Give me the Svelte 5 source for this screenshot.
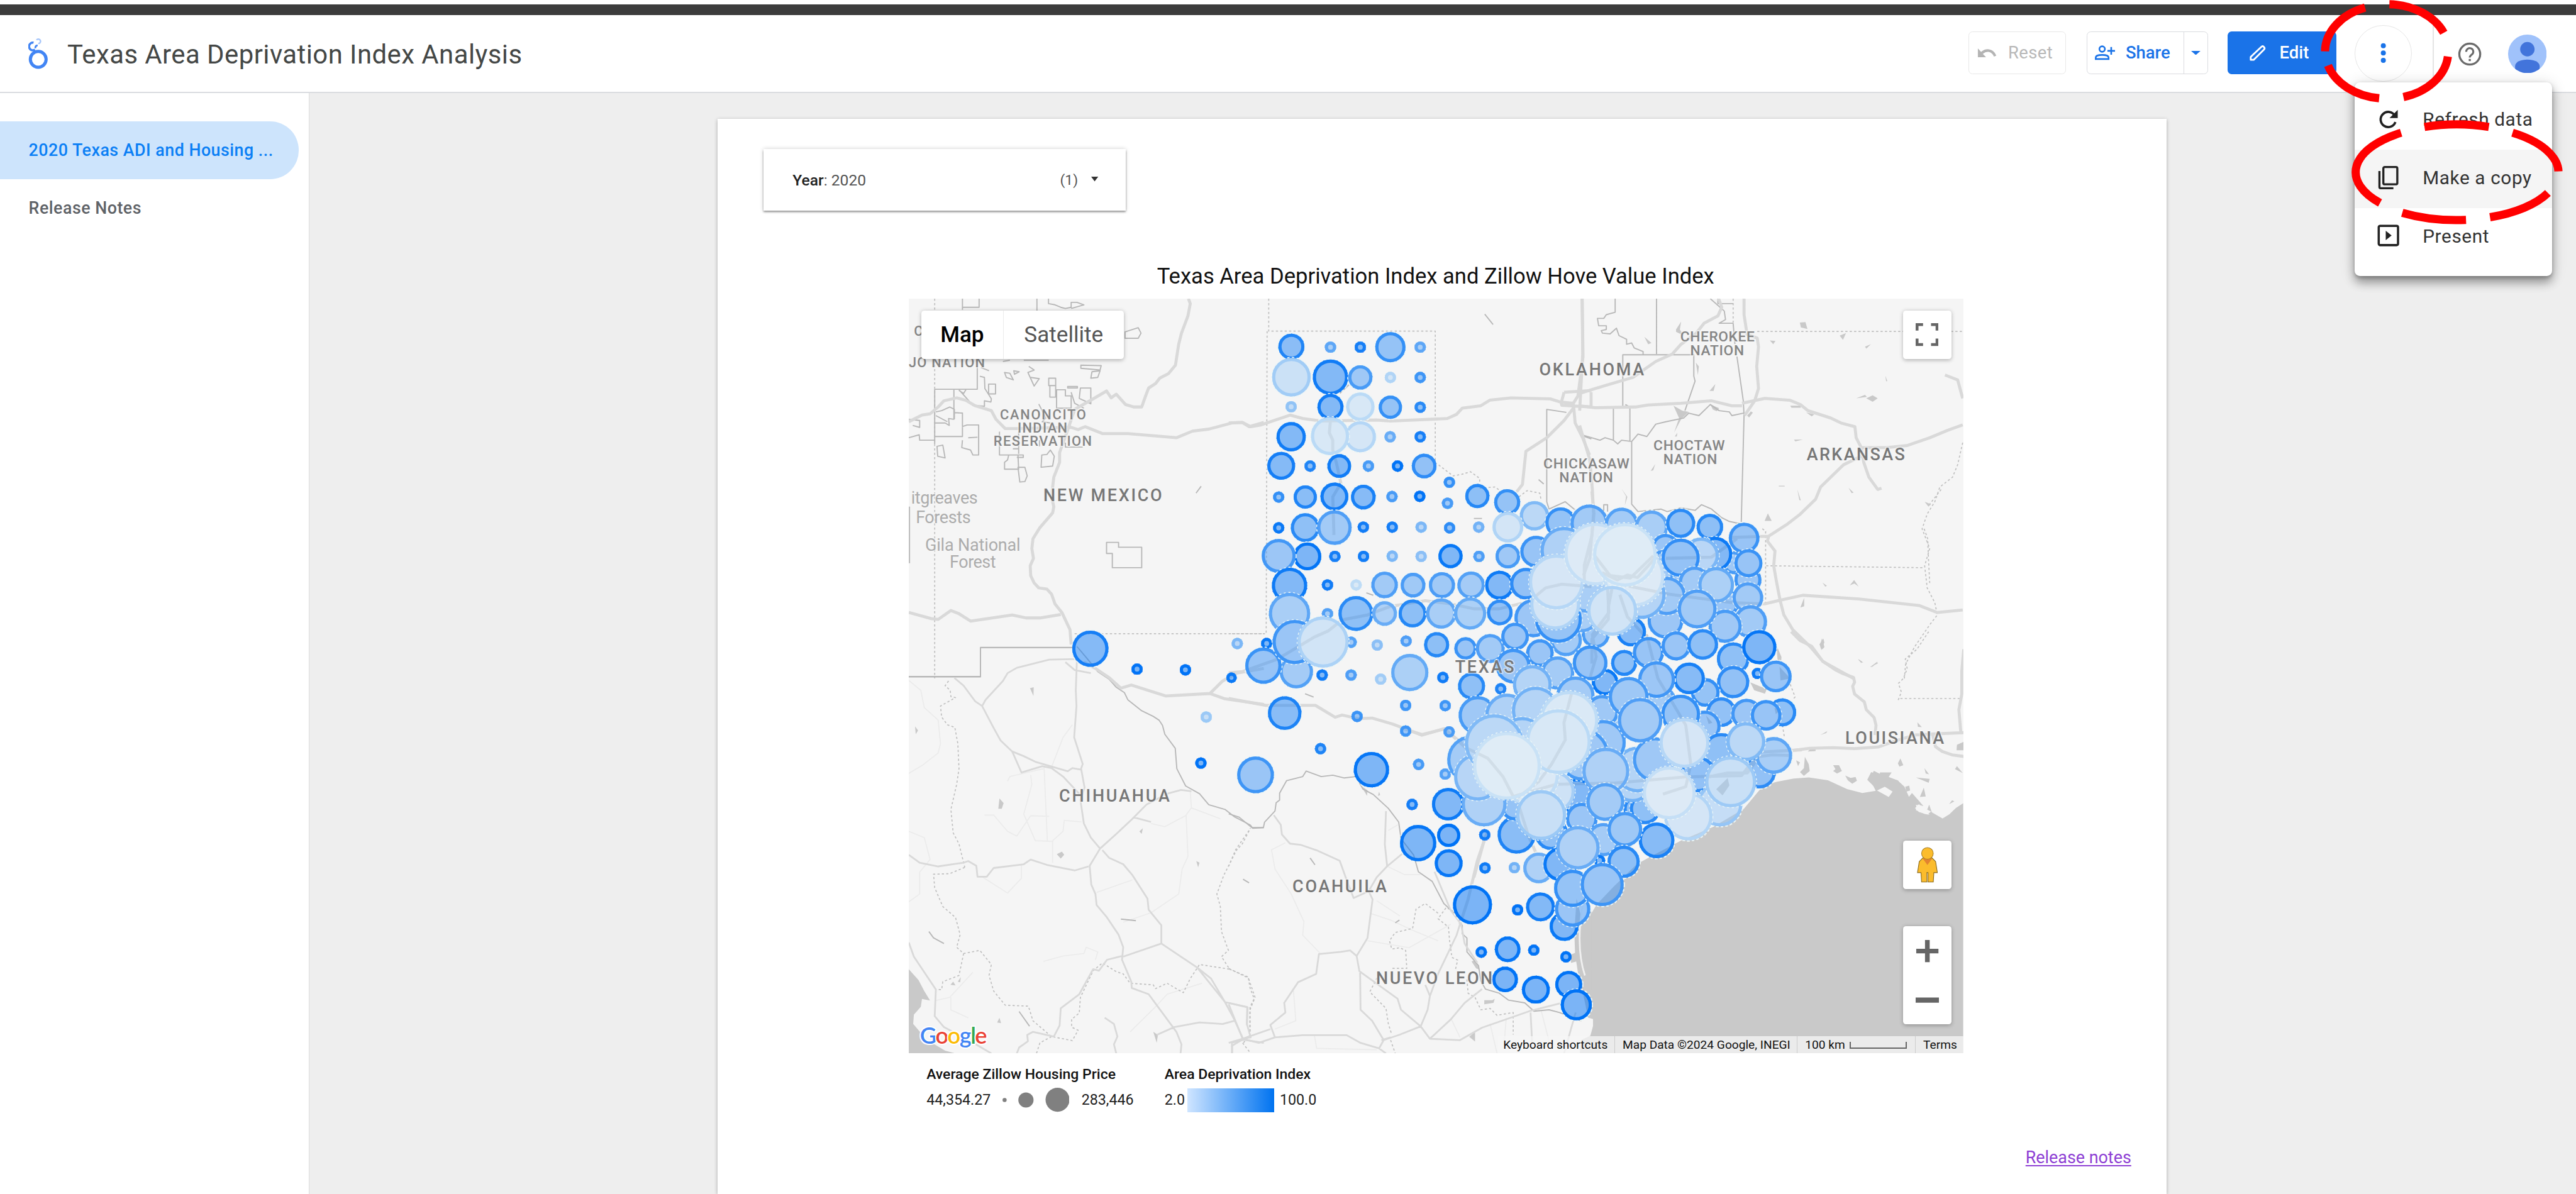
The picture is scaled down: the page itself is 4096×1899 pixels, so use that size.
<script>
  const pages = ['2020 Texas ADI and Housing ...', 'Release Notes'];

  // Map artwork is stored per tile: origin on the page plus units per page pixel.
  const T = {
    nw: { o: [1540, 500], k: [2.529, 2.3758] },
    panhandle: { o: [2100, 500], k: [2.529, 2.3758] },
    ne: { o: [2700, 500], k: [2.3059, 2.3758] },
    sw: { o: [1540, 1100], k: [2.529, 1.8667] },
    center: { o: [2400, 840], k: [2.3059, 2.3758] },
    south: { o: [2100, 1080], k: [2.529, 2.1189] },
    gulf: { o: [2700, 1300], k: [1.53125, 2.1132] },
    coast: { o: [2920, 1080], k: [3, 3] }
  };

  const place = (t) => `translate(${t.o[0]} ${t.o[1]}) scale(${1 / t.k[0]} ${1 / t.k[1]})`;

  const tiles = [
    {
      t: T.gulf,
      water: 'M-8,500 L-14,620 -12,700 -2,790 10,850 22,930 35,935 35,960 28,995 5,1010 0,1059 H1004 V155 L985,172 968,195 950,210 922,188 915,160 905,195 880,180 885,160 900,165 870,118 862,132 850,95 832,72 800,58 770,38 760,68 775,110 740,118 700,104 650,72 600,62 560,66 515,78 480,92 430,175 350,240 265,290 190,345 150,375 90,455 45,520 10,600 Z',
      land: 'M780,108L800,95 820,108 810,130Z M880,160L895,168 920,185 910,196 885,182Z',
      roads: '', thin: '', border: '', dotted: ''
    },
    {
      t: T.nw,
      roads: 'M1242,25 L1250,45 1240,95 1212,165 1200,210 1186,295 1155,330 1118,348 1100,370 1070,388 1057,420 1040,465 1005,465 970,455 930,413 908,428 888,400 830,432 750,475 725,545 M33,525 L90,498 125,493 160,465 185,440 240,428 280,438 320,460 390,480 410,515 450,553 500,553 735,548 765,557 795,545 870,573 980,573 1190,590 1260,563 1330,555 1430,530 1475,528 1505,545 1568,528 M725,545 L685,650 685,690 660,750 650,830 660,870 655,895 600,955 570,1000 565,1040 572,1080 558,1110 560,1150 575,1180 595,1200 630,1205 650,1225 665,1265 695,1300 730,1370 735,1430 M33,1300 L130,1325 160,1328 215,1292 250,1305 300,1335 480,1310 540,1322 600,1322 690,1308',
      thin: '',
      border: 'M265,25V70 M265,60H337V25 M587,25V75 M329,290V393H145V615 M33,1560H343V1443H740 M888,1015H940V1035H1040V1118H913V1060H888Z M968,160L1025,143 1037,165 1025,186H968Z M637,25V45L665,50 690,60 710,65 735,60V40H760L790,50 735,65 M340,340L360,345 362,390 390,432 388,445 360,440V462L310,458 250,395 M378,372H408V412H378Z M228,395V515L205,512 208,540 190,530H145V585H265V490L230,488 M263,545L285,538H335V660H310L300,640 262,630 265,600 M290,590L330,588 M33,590L78,578 80,600H145 M33,515L80,520V548L50,540 M155,625L180,620 190,672 158,665Z M150,485L175,480 210,465 230,475V515 M150,500L200,525 M777,295L865,297 860,315 777,308Z M825,322L860,318 850,345 820,348Z M552,300L575,315 548,325 575,380 597,350 560,345 M447,325L470,328 485,355 455,345Z M487,318L510,322 490,332Z M638,348H668V378H638Z M643,378H668V425H643Z M672,395H710V420H735V470H672Z M720,382H762V388H720Z M775,388H820V452L770,430Z M735,405L750,450 790,470 M595,453L615,490 625,510 610,525 645,530 M425,565V660H528V670H500 M483,635H508V655 M508,565V655 M447,690L460,680 465,660H505L508,718H447Z M505,710H535L545,745 535,768 513,770Z M605,710L608,660 630,658 645,640 662,665 655,705Z M598,625V600 M710,610V628H785 M530,275H638 M440,280L470,275 M345,305L380,318 M36,870V1100 M1275,815L1297,787 M250,398L270,410 280,395',
      dotted: 'M145,25V1568 M750,1386H1568',
      water: '', land: ''
    },
    {
      t: T.panhandle,
      roads: 'M0,530 L60,528 95,545 140,538 265,498 320,512 400,522 640,518 700,522 945,512 985,495 1010,470 1090,460 1130,437 1220,428 1390,432 1435,445 1490,450 M440,520 L435,570 450,600 450,640 465,690 485,775 450,830 455,985 M0,1545 L60,1540 210,1490 370,1400 430,1375 490,1330 600,1310 700,1275 850,1252 960,1265 1060,1285 1170,1285 1300,1255 1370,1200 1440,1185 1568,1195 M1528,25 L1532,260 1510,420 1490,450 M1490,470 L1450,520 1375,590 1285,645 1280,690 1270,780 1245,810 M1450,405 L1568,398 M1440,440 L1450,405 M1435,440 L1440,458 1568,465 M1490,450 L1498,530 1530,590 1560,660',
      thin: '',
      border: 'M1460,487L1375,475V850L1385,880 M1525,580L1568,595 M1107,88L1143,130 M1340,760L1362,778 M480,410L520,375 M1385,880L1455,850 1500,885 M1060,918H1095 M595,1220L625,1230',
      dotted: 'M173,25V157H893V690L935,720 970,745 1010,738 1045,728 1085,755 1085,795 1150,790 1190,815 M166,157L162,1386H0 M1255,830L1290,805 1345,815 1350,840',
      water: '', land: ''
    },
    {
      t: T.ne,
      roads: 'M10,25 L12,250 0,480 M548,25 L560,60 545,95 490,125 460,165 400,210 365,250 300,280 210,345 100,378 0,410 M45,405V465 M0,460 L60,468 220,465 270,457 400,450 520,440 600,460 640,460 M648,25 V90 L660,170 700,185 705,220 698,300 705,390 690,440 650,500 M640,450 L730,430 830,438 870,455 900,480 990,510 1030,530 1085,545 1090,590 1110,630 1210,630 1290,622 1380,590 1450,560 1510,538 M1110,630 L1120,690 1140,750 1175,800 1190,795 M1120,660 L1040,700 950,790 930,840 870,900 820,940 745,990 600,995 M745,990 L740,1010 770,1050 765,1110 775,1170 790,1250 805,1310 840,1370 910,1440 960,1500 1080,1568 M600,1260 L730,1265 790,1250 880,1230 1100,1245 1340,1272 1410,1300 1510,1290 M1440,335 L1490,355 1510,430 M0,540L40,680 50,800 55,900 40,1080 15,1150 M600,1260 L350,1225 180,1190 M60,1070L120,1150 200,1160 290,1070 M340,1080L520,1075 620,1000 M110,1200L115,1300 50,1390 65,1480 40,1568',
      thin: '',
      border: 'M140,25V80L105,90 95,105 70,105 75,135 105,135 105,150 85,155 90,165 120,168 145,145 155,175 185,190 185,210 205,205 215,225 250,240V255 M303,25V250 M170,465V253H450L450,340 455,360 415,480 M620,260L645,440 648,500 637,935 M133,470V600 M198,460V605 M15,580L80,600 100,590 133,600 150,615 165,600 205,605V860L230,890 320,880 345,890 400,875 455,885 480,862 520,880 560,915 590,930 635,940 M205,605L230,575 265,585 300,535 340,525 410,510 430,490 470,500 515,455 550,480 590,485 600,500 645,490 M515,25L570,75 575,110 550,125 605,125 M605,125L612,210 M545,25V45H605 M180,455L198,465 M95,905V862H110V890',
      dotted: 'M605,25V125 M700,158H1510 M733,970V1265 M735,1110L1355,1118 M1510,610L1490,700 1470,750 1420,790 1400,850 1370,900 1350,960 1380,1040 1360,1110 1370,1200 1400,1260 1410,1310 1380,1350 1320,1440 1285,1510 1280,1568 M1358,960L1372,1000 1375,1080 1380,1180 M1425,800L1380,860 M720,960L735,970',
      water: 'M868,122L890,120 898,148 872,142Z M1130,430L1155,418 1175,430 1155,444Z M1090,430L1125,416 1132,424Z M370,460L405,480 430,485 400,515 372,570 392,510Z M515,455L550,470 540,482 525,475Z M742,897L757,928 729,928Z M750,195L772,197 763,210Z M1025,175L1050,165 1038,192Z M1125,220L1148,210 1130,228Z M255,180L283,205 270,210Z M380,150L400,118 395,150 410,175 380,160Z M458,285L470,300 466,335Z M512,400L535,372 528,400Z M1205,338L1213,360 1208,360Z M893,487L925,495 915,503Z M830,460H870L872,468H835Z M660,500L675,483 683,488 668,508Z M845,598L880,597 850,605Z M1060,793L1080,813 1072,815Z M858,800L872,845 866,843Z M165,797L188,830 178,865 183,828Z M375,585L385,570 383,585Z M957,1178L975,1192 968,1195Z M1065,1190L1082,1168 1100,1195 1083,1182Z M870,1280L885,1240 885,1275Z M955,1405L965,1440 957,1450 948,1435Z M1097,1490L1115,1500 1110,1505Z M1145,1522L1175,1500 1155,1520Z M280,725L298,697 290,722Z M775,1430L795,1510 780,1490Z M785,785H808V788H785Z M1360,850L1385,860 1375,870Z',
      land: ''
    },
    {
      t: T.coast,
      roads: 'M425,0 L470,45 530,75 585,150 650,195 690,215 745,235 750,260 740,280 750,320 800,360 810,400 850,440 860,480 855,530 M425,610L520,598 640,595 750,600 870,592 960,560 1060,530 1150,525 1310,518 M1310,90L1300,200 1300,320 1285,400 1295,520 M1150,525L1165,590 1200,615 1250,632 1310,640 M0,745L100,725 200,725 260,640 330,632 425,635',
      thin: '',
      border: '',
      dotted: 'M1130,0L1070,90 1010,140 1020,190 1000,240 975,265 990,310 970,360 M985,343H1300 M420,270L445,335 430,350 M380,480L390,540',
      water: 'M350,70L375,130 372,170 360,140Z M365,180L420,240 370,250Z M215,260L300,295 290,318 235,300Z M575,530L610,510 605,520Z M495,642L515,680 520,715 490,740 470,720 490,700Z M450,660L470,670 460,690Z M640,685L670,685 685,715 660,728 640,715 652,705Z M702,738L730,750 755,745 762,765 738,780 715,762Z M835,720L880,735 880,722H940L925,745 975,765 1000,830 870,815 815,760Z M985,650L1000,685 980,692 972,675Z M1108,700L1132,732 1115,728Z M1065,748L1135,755 1130,775Z M1275,690L1305,725 1265,705Z M1310,565L1275,580 1273,608 1310,608Z M1105,800L1115,845 1085,848Z M1010,795L1030,790 1035,815 1015,820Z M1072,465L1095,490 1075,488Z M1235,885L1250,865 1262,870Z M830,182L865,155 870,162Z M770,140L795,160 780,155Z M570,65L590,35 595,55 580,95Z M525,600H550V612L510,615Z',
      land: 'M865,815L905,795 945,820 925,848Z M1060,905L1080,885 1135,940 1080,925Z'
    },
    {
      t: T.center,
      roads: 'M740,0L748,90 740,180 710,300 710,370 M780,330L840,360 880,340 920,350 1000,260 M820,390L805,470 805,520 740,600 740,700 M850,420L880,510 960,600 1000,760 1070,880 1110,950 1130,1110 1110,1200 1020,1230 M0,965L70,988 160,965 240,1040 330,1085 390,1160 430,1240 M430,1240L600,1190 830,1185 1110,1160 1330,1155 1400,1060 1568,1050 M660,820L630,940 635,1010 580,1110 530,1180 440,1250 M450,1270L490,1400 520,1470 M320,1400L275,1568',
      thin: '', border: '', dotted: '',
      water: 'M1230,1210L1275,1165 1282,1195 1255,1235Z M1190,910L1215,940 1200,945Z M1460,880L1485,888 1465,905Z M950,570L975,600 955,600Z',
      land: ''
    },
    {
      t: T.sw,
      roads: 'M790,60L840,80 900,110 950,143 995,133 1145,168 1335,160 1390,120 1450,95 1568,80 M1335,160L1400,177 1568,195',
      thin: 'M230,110L270,135 320,185 350,200 400,270 430,310 480,345 530,360 580,378 720,408 740,398 778,403 M350,200L365,180 440,120 460,95 500,78 640,52 760,50 755,150 758,200 748,300 785,385 778,400 793,460 775,500 790,575 820,620 860,655 815,710 822,770 840,800 845,835 890,875 940,930 960,970 955,1010 995,1080 997,1100 1070,1120 1130,1180 1190,1240 1212,1280 1208,1309 M480,345L520,412 610,392 650,398 700,425 770,480 M860,655L935,605 1000,560 1060,515 1150,480 1210,468 1255,472 M870,660L900,685 960,705 1000,740 1065,815 1070,850 1125,900V958L960,1000 M1125,958L1280,1035 1400,1145 1440,1200 1480,1265 M955,998L890,1010 855,1045 830,1040 770,1120 690,1165 685,1220 660,1255 570,1240 545,1250 548,1270 510,1290 500,1309 M33,675L80,700 160,712 270,700 290,695 325,710 330,745 370,745 400,717 530,705 560,690 630,707 750,725 810,712 M33,955L55,1000 150,1105 145,1190 185,1225 300,1270 390,1309 M1280,1035L1340,1070 1400,1145 1498,1162 1495,1220 M1105,1250L1180,1225 1290,1210 1390,1215 1440,1205 M1430,1309L1430,1275 1480,1265 1568,1275 M880,1195L920,1215 935,1255 920,1280 930,1309 M1005,555L1080,570 M710,60L750,85 820,95',
      faint: 'M33,118L85,150 100,205 160,245 170,320 160,350 90,390 33,415 M650,395L700,300 740,260 M460,440L470,425 615,400 M360,548H400L460,600 500,615 560,550 640,552 M560,420L565,450 530,545 580,630 655,632V700 M618,395L632,630 M655,630L700,600 705,565 780,570 M33,600L100,620 125,690 80,730 80,800 33,825 M845,795L1000,755 M1080,575L1140,585 1230,550 1255,525 1250,475 M1232,550L1240,680 1215,720 1200,800 1080,860 960,890 M1255,525L1380,560 M615,1015L700,998 790,990 800,970 850,985 840,1010 M150,1140L210,1130 310,1050 M215,1130V1170L290,1195 M990,1240L1100,1160 1150,1120 1300,1085 M520,705V750L460,797 350,745',
      border: 'M33,107H343V13H740 M760,10L800,45 850,90 900,115 930,140 965,157 980,180 1040,215 1090,233 1115,245 1130,262 1140,290 1185,335 1192,400 1230,455 1290,480 1330,515 1400,530 1440,553 1510,580 1520,590 1568,588 M120,920L140,940 185,958 M950,880L1015,885 M510,1175L555,1222',
      dotted: 'M205,120L190,135 212,150 215,170 235,173 170,200 175,235 200,260 232,268 245,320 250,400 240,450 215,530 225,605 250,640 275,715 M275,715L210,735 140,737 145,780 180,840 235,875 255,930 240,970 270,990 340,980 390,1025 380,1060 400,1110 450,1155 550,1158 570,1205 650,1255 740,1268 765,1235 737,1225V1200L770,1180 775,1130 830,1045 870,1020 930,1048 960,1055 990,1085 1090,1090 1100,1102 1150,1085 1220,1115 1250,1070 1290,1025 1420,1040 1385,1000 1415,980 1385,920 1380,840 1365,800 1395,740 1450,660 1475,640 1510,590 M270,990L250,1060 180,1080 175,1105H150 M1420,1040L1500,1065 1530,1130 1508,1170V1250L1480,1275 M650,1255L600,1275 585,1309',
      water: 'M33,1040L75,1075 100,1110 125,1140 90,1135 85,1160 55,1185 52,1215 110,1265 190,1300 235,1309H33Z M425,495L443,510 435,528 420,528Z M673,673L695,665 705,675 690,687Z M557,143L573,140 572,168Z M1030,600L1045,590 1040,608Z M1090,1240L1110,1250 1105,1275Z M213,1090L225,1080 235,1092Z M245,1080L258,1065 255,1082Z M415,1210L425,1195 432,1212Z M60,265L73,278 63,290Z M1276,695L1290,700 1284,715Z',
      land: ''
    },
    {
      t: T.south,
      roads: 'M0,242 L160,267 375,267 460,310 490,302 560,315 620,313 710,335 835,375 930,352 1010,405 M1120,720L1075,830 1035,970 1000,1060',
      thin: 'M195,665L225,700 230,735 265,768 310,772 380,792 480,830 510,900 540,965 620,935 M680,650L675,770 685,850 640,890 605,940 622,970 600,1110 553,1175 565,1230 730,1330 745,1370 830,1430 M685,850L750,805 M553,1175L525,1155 485,1160 390,1168 378,1240 300,1270 240,1345 245,1380 180,1425 200,1470 130,1490 60,1475 M180,1440L60,1475 0,1490 M568,1230L570,1370 620,1410 670,1480 650,1510 M1000,1060L985,1100 905,1240 870,1320 860,1370 830,1430 870,1475 1000,1480 1095,1435 1300,1375 1440,1345 M830,1430L740,1460 670,1480 M870,1475L960,1405 1020,1345 1095,1295 M1305,1380L1312,1490 M200,1470L320,1462 510,1462 570,1490 650,1510 M0,1345L80,1360 78,1420 95,1470 60,1475 0,1350 M850,1280L870,1320 M890,870L960,1010 1005,1060 1020,1130 1075,1200 M15,1528V1500L60,1478 M650,1510L680,1528 M660,1480L700,1470 M1500,1380L1450,1528',
      faint: 'M245,765L185,790 200,860 270,950 325,1050 320,1100 395,1165 M610,1020L700,1045 790,1080 905,1120 M690,720L730,700 M685,850L760,880 830,880 M640,975L740,1030 M600,1120L780,1145 960,1060 M370,1460L380,1510 640,1515 M960,1400L1000,1470 M1130,1420L1160,1528 M1200,1400L1190,1500 M1350,1370L1390,1500 M280,1300L290,1410 200,1440',
      border: 'M0,660L45,672 100,710H150L155,690 200,650 205,620 220,610V585L250,540 320,525 335,505 400,525 450,520 500,530 550,525 580,570 625,590 690,640 735,690 745,750 800,810 820,870 880,905 930,985 975,1020 1010,1065 1010,1095 1030,1110 1030,1160 1080,1210 1090,1265 1110,1295 1170,1310 1210,1335 1280,1345 1320,1375 1385,1370 1430,1380 1525,1410 M352,820L373,845 M62,897L88,910 M330,225L367,237 M720,1055L738,1045',
      dotted: 'M88,720L30,790 0,850 M990,1020L940,1000 905,1040 950,1070 955,1120 965,1180 990,1190 980,1225 M905,1020L850,985 810,1005 795,1075 720,1090 695,1120 705,1150 740,1145 765,1155 770,1220 700,1220 M0,1220L85,1255 92,1290 110,1330 92,1360V1450 M650,1240L610,1305 680,1365 690,1420 705,1460 M700,1480L720,1528 M1030,1260L1035,1310 1065,1325 1090,1370 1130,1365 1160,1390 1230,1380V1460 M60,1490L95,1528',
      water: 'M1507,1090L1520,1060 1568,1010V1300L1530,1240 1525,1190 1480,1200 1480,1170 1508,1160Z M1105,1335H1140L1150,1330 1145,1345 1105,1350Z M1040,1468L1065,1450 1065,1485Z M1050,1195L1065,1190 1085,1225 1070,1220Z M575,560L600,575 598,595 580,570Z M650,580L655,592 645,595Z',
      land: ''
    }
  ];

  // County bubbles: [x, y, radius, index 0..1], painted back to front.
  const counties = [
    [T.panhandle, [
      [271, 220, 56, .84], [440, 222, 24, .55], [569, 222, 24, .9], [699, 222, 65, .75], [828, 222, 24, .55],
      [271, 344, 83, .22], [440, 344, 76, .92], [569, 345, 52, .65], [699, 345, 24, .15], [828, 345, 24, .7],
      [270, 464, 24, .3], [440, 465, 56, .92], [569, 464, 61, .1], [699, 466, 50, .75], [828, 466, 24, .8],
      [270, 586, 63, .92], [569, 586, 67, .13], [438, 583, 82, .1], [698, 586, 24, .5], [828, 586, 24, .9],
      [227, 704, 60, .9], [352, 705, 24, .85], [478, 705, 51, .92], [604, 705, 24, .65], [730, 705, 24, 1], [845, 705, 53, .78],
      [954, 771, 24, .75], [946, 856, 24, .65],
      [216, 831, 24, .75], [331, 831, 50, .85], [582, 831, 53, .88], [457, 829, 60, .92], [706, 829, 24, .65], [826, 828, 24, 1], [1075, 827, 52, .82], [1204, 852, 56, .75],
      [216, 956, 24, .95], [331, 955, 62, .8], [457, 955, 74, .62], [582, 953, 24, .92], [707, 953, 24, .9], [832, 953, 24, .4], [955, 956, 24, .78], [1081, 953, 24, .45], [1322, 907, 63, .38], [1207, 953, 66, .15],
      [340, 1072, 60, .98], [216, 1070, 73, .68], [459, 1072, 24, .9], [583, 1072, 24, .92], [707, 1071, 24, .4], [832, 1072, 24, .33], [959, 1071, 52, .96], [1082, 1072, 24, .62], [1207, 1071, 53, .65],
      [263, 1190, 76, .93], [427, 1188, 24, .92], [551, 1188, 24, .08], [674, 1188, 57, .62], [797, 1189, 53, .64], [922, 1189, 56, .64], [1048, 1189, 59, .6], [1171, 1189, 62, .93], [1288, 1185, 62, .8],
      [263, 1304, 89, .55], [427, 1305, 24, .6], [550, 1304, 75, .8], [674, 1304, 53, .5], [795, 1304, 60, .82], [919, 1304, 65, .55], [1044, 1304, 69, .52], [1172, 1300, 55, .78],
      [37, 1426, 24, .4], [164, 1426, 24, .95], [529, 1421, 24, .6], [292, 1540, 72, .6], [150, 1516, 78, .72], [285, 1420, 95, .7], [408, 1420, 110, .17], [642, 1432, 24, .33], [767, 1416, 24, .62], [899, 1431, 54, .82],
      [1024, 1446, 48, .72], [1131, 1446, 62, .62]
    ]],
    [T.nw, [[818, 1447, 78, .9], [1020, 1530, 24, 1], [1229, 1533, 24, 1]]],
    [T.sw, [[1319, 235, 24, .25], [1296, 382, 24, 1]]],
    [T.south, [
      [12, 167, 22, .95], [404, 157, 24, .92], [529, 157, 24, .62], [657, 172, 24, .22], [783, 148, 80, .52], [926, 166, 24, .92], [1050, 197, 58, .8], [1176, 207, 24, .85],
      [242, 295, 72, .86], [555, 307, 24, .72], [765, 267, 24, .7], [936, 268, 24, .7], [765, 360, 24, .7], [953, 363, 24, .65], [397, 424, 24, .85], [116, 519, 79, .7], [617, 500, 76, .97],
      [821, 481, 24, .65], [936, 516, 24, .6], [793, 626, 24, .9], [949, 625, 70, .93], [819, 766, 78, .97], [951, 738, 50, 1], [951, 839, 60, .97], [1107, 736, 24, .92], [1108, 856, 24, .93],
      [1235, 855, 24, .45], [1054, 990, 84, 1], [1249, 1008, 24, 1], [1092, 1161, 24, 1], [1206, 1151, 55, .97], [1319, 1154, 24, 1], [1458, 1178, 24, 1], [1195, 1260, 55, 1], [1328, 1297, 60, 1],
      [1470, 1278, 58, 1], [1503, 1352, 67, 1], [1245, 735, 82, .85], [1340, 856, 66, .5]
    ]],
    [T.center, [
      [617, 127, 60, .75], [730, 130, 74, .62], [857, 135, 66, .6], [975, 145, 65, .55], [1090, 130, 57, .8], [1205, 145, 52, .82],
      [520, 245, 62, .72], [630, 240, 92, .5], [1030, 230, 55, .7], [1300, 290, 45, .65], [1225, 255, 68, .93], [1170, 260, 70, .4], [1340, 190, 60, .72],
      [1355, 360, 53, .7], [1357, 292, 55, .72], [1095, 350, 60, .65], [1025, 300, 60, .65], [1090, 270, 75, .76], [1250, 450, 70, .7], [1145, 370, 62, .62], [1230, 380, 70, .52], [1355, 432, 60, .62],
      [1365, 530, 65, .62], [1265, 548, 65, .65], [1030, 525, 70, .68], [1035, 425, 75, .62], [1155, 478, 76, .62], [480, 375, 62, .78], [510, 515, 75, .68],
      [755, 580, 55, .65], [895, 570, 58, .88], [638, 605, 62, .6], [700, 500, 70, .55], [720, 400, 90, .55], [608, 520, 92, .75], [935, 420, 95, .45], [595, 460, 98, .15], [600, 368, 108, .12],
      [437, 590, 54, .7], [535, 657, 54, .7], [755, 255, 123, .05], [905, 345, 120, .05], [870, 258, 125, .03], [820, 485, 98, .17],
      [430, 710, 68, .7], [605, 738, 65, .6], [792, 775, 52, .95], [733, 697, 68, .72], [867, 697, 51, .82], [963, 655, 61, .72], [1072, 628, 57, .7], [1177, 622, 60, .8], [1297, 680, 64, .8],
      [1297, 775, 63, .78], [1400, 633, 67, .97], [1393, 740, 22, .93], [1465, 752, 62, .7], [1187, 817, 56, .75], [1123, 760, 62, .88], [1010, 850, 60, .6], [995, 765, 72, .68], [505, 785, 76, .45], [675, 830, 75, .6],
      [1250, 897, 58, .78], [1350, 905, 60, .68], [1490, 898, 55, .8], [1427, 910, 60, .72], [1080, 1070, 75, .6], [830, 960, 60, .62], [780, 895, 65, .65], [885, 835, 78, .66], [1185, 955, 62, .7], [1090, 905, 76, .75],
      [1190, 1220, 55, .75], [840, 1200, 75, .6], [920, 1290, 55, .8], [950, 1290, 60, .8], [900, 1180, 80, .45], [920, 1130, 90, .45], [785, 1020, 88, .65], [990, 1090, 88, .65], [930, 930, 87, .62],
      [435, 1280, 55, .75], [680, 1240, 72, .93], [1250, 1060, 75, .8], [1160, 1150, 70, .78], [1400, 1140, 65, .78], [1457, 1073, 72, .55], [1105, 1022, 98, .12], [1347, 1017, 76, .38],
      [290, 910, 75, .65], [405, 910, 85, .5], [580, 1390, 65, .8], [265, 1090, 95, .6], [315, 1270, 88, .5], [290, 1160, 93, .42], [705, 1070, 102, .65], [795, 1137, 92, .5],
      [518, 890, 93, .45], [465, 1010, 90, .45], [355, 1025, 115, .38], [650, 930, 115, .08], [590, 1220, 82, .2], [490, 1150, 120, .07], [608, 1017, 127, .1], [405, 1115, 133, .03],
      [700, 1330, 62, .7], [785, 1415, 65, .6], [793, 1262, 74, .6], [540, 1315, 98, .25], [1245, 1270, 88, .28], [1287, 1180, 100, .24], [1120, 1320, 95, .14], [1045, 1225, 104, .05],
      [995, 1418, 70, .88], [870, 1373, 68, .66], [770, 1500, 22, .95], [615, 1515, 66, .95], [685, 1448, 85, .5], [865, 1505, 63, .8]
    ]],
    [T.south, [[1348, 997, 62, .92], [1450, 1068, 62, .95], [1487, 1005, 76, .7], [1487, 930, 80, .75]]],
    [T.gulf, [[59, 449, 56, .7]]]
  ];

  const bubbles = counties.flatMap(([t, list]) =>
    list.map(([x, y, r, v]) => ({
      x: t.o[0] + x / t.k[0],
      y: t.o[1] + y / t.k[1],
      r: r / t.k[0] - 2.6,
      red: Math.round(207 * (1 - v)),
      green: Math.round(229 - 114 * v)
    }))
  );

  // text, x, baseline, width, size, tone
  const labels = [
    ['NEW MEXICO', 1783, 857, 203, 29, 'state'],
    ['OKLAHOMA', 2631, 642, 179, 29, 'state'],
    ['ARKANSAS', 3088, 787, 168, 29, 'state'],
    ['TEXAS', 2487, 1150, 101, 29, 'state'],
    ['LOUISIANA', 3154, 1272, 169, 29, 'state'],
    ['CHIHUAHUA', 1810, 1371, 189, 29, 'state'],
    ['COAHUILA', 2209, 1526, 161, 29, 'state'],
    ['NUEVO LEON', 2352, 1683, 199, 29, 'state'],
    ['CANONCITO', 1709, 717, 147, 23.5, 'nation'],
    ['INDIAN', 1739, 739.5, 85, 23.5, 'nation'],
    ['RESERVATION', 1698, 762, 168, 23.5, 'nation'],
    ['JO NATION', 1553, 628, 130, 23.5, 'nation'],
    ['C', 1562, 574, 15, 23.5, 'nation'],
    ['CHEROKEE', 2872, 584, 127, 24.5, 'nation'],
    ['NATION', 2889, 607, 92, 24.5, 'nation'],
    ['CHOCTAW', 2826, 770, 122, 24.5, 'nation'],
    ['NATION', 2843, 793, 92, 24.5, 'nation'],
    ['CHICKASAW', 2638, 801, 147, 24.5, 'nation'],
    ['NATION', 2665, 824, 92, 24.5, 'nation'],
    ['itgreaves', 1557, 861, 114, 29, 'park'],
    ['Forests', 1565, 894, 94, 29, 'park'],
    ['Gila National', 1581, 942, 163, 29, 'park'],
    ['Forest', 1623, 971, 79, 29, 'park']
  ];
</script>

<div class="app">
  <div class="strip"></div>
  <header>
    <svg class="logo" viewBox="0 0 36 56">
      <circle cx="17" cy="38" r="13.500" fill="none" stroke="#4285f4" stroke-width="5.400" />
      <path d="M11 4.500a6.600 6.600 0 1 0 2.500 12" transform="translate(-2 5)" fill="none" stroke="#4285f4" stroke-width="3.800" />
      <path d="M13 11q0-5 4-4.600" transform="translate(-1 8)" fill="none" stroke="#4285f4" stroke-width="3" />
      <path d="M14 5a3.800 3.800 0 1 1 3 6" fill="none" stroke="#a8c7fa" stroke-width="2.600" />
    </svg>
    <h1>Texas Area Deprivation Index Analysis</h1>
    <button class="btn reset">
      <svg viewBox="0 0 34 18"><path d="M1 1v15h14L9.500 10.500C16 4.500 25 6 28.500 15l4-1.500C28 1.500 15-1 6.500 7z" fill="#b4b4b4" /></svg>
      <span>Reset</span>
    </button>
    <div class="share">
      <button>
        <svg viewBox="0 0 36 26">
          <circle cx="13.500" cy="6.500" r="4.700" fill="none" stroke="#1a73e8" stroke-width="2.800" />
          <path d="M2.500 23.500v-2.500c0-6 22-6 22 0v2.500z" fill="none" stroke="#1a73e8" stroke-width="2.800" />
          <path d="M29 3v13M22.500 9.500h13" stroke="#1a73e8" stroke-width="2.800" />
        </svg>
        <span>Share</span>
      </button>
      <button class="caret"><svg viewBox="0 0 16 7"><path d="M0 0h16L8 7z" fill="#1a73e8" /></svg></button>
    </div>
    <button class="btn edit">
      <svg viewBox="0 0 30 29"><path d="M3 26v-5L21.500 3.500q2-1.500 3.500 0l1 1q1.500 2 0 3.500L8 26z" fill="none" stroke="#fff" stroke-width="3" stroke-linejoin="round" /></svg>
      <span>Edit</span>
    </button>
    <button class="more">
      <svg viewBox="0 0 10 36"><circle cx="5" cy="5" r="4.300" fill="#1a73e8" /><circle cx="5" cy="17.500" r="4.300" fill="#1a73e8" /><circle cx="5" cy="30" r="4.300" fill="#1a73e8" /></svg>
    </button>
    <div class="rule"></div>
    <svg class="help" viewBox="0 0 42 42">
      <circle cx="21" cy="21" r="18.300" fill="none" stroke="#6b6b6b" stroke-width="3.600" />
      <path d="M14.800 17a6.200 6.200 0 1 1 9.800 4.800Q21 24.500 21 27" fill="none" stroke="#6b6b6b" stroke-width="3.400" />
      <rect x="19.200" y="29.500" width="3.700" height="3.700" fill="#6b6b6b" />
    </svg>
    <svg class="avatar" viewBox="0 0 66 66">
      <defs><clipPath id="face"><circle cx="33" cy="33" r="33" /></clipPath></defs>
      <circle cx="33" cy="33" r="33" fill="#a0c2fb" />
      <g clip-path="url(#face)" fill="#4274db">
        <circle cx="33" cy="25" r="12.300" />
        <path d="M12 66V54c0-15 42-15 42 0v12z" />
      </g>
    </svg>
  </header>

  <div class="body">
    <nav>
      {#each pages as p, i}
        <a class:active={i === 0} href="#page">{p}</a>
      {/each}
    </nav>
    <main>
      <section class="report">
        <div class="filter">
          <span class="name"><b>Year</b>: 2020</span>
          <span class="count">(1)</span>
          <svg viewBox="0 0 12 8"><path d="M0 0h12L6 8z" fill="#333" /></svg>
        </div>
        <h2>Texas Area Deprivation Index and Zillow Hove Value Index</h2>
        <div class="map">
          <svg class="canvas" viewBox="1553 510.500 1803 1290.500" preserveAspectRatio="none">
            <defs>
              <!-- Blue channel marks ring (255) or disc (0); it becomes the alpha so discs stay see-through. -->
              <filter id="glass" filterUnits="userSpaceOnUse" x="1553" y="510" width="1803" height="1291" color-interpolation-filters="sRGB">
                <feColorMatrix type="matrix" values="1 0 0 0 0  0 1 0 0 0  0 0 0 0 .965  0 0 .5 .5 0" />
              </filter>
            </defs>
            <rect x="1553" y="510" width="1803" height="1291" fill="#f5f5f5" />
            {#each tiles as tile}
              <g transform={place(tile.t)}>
                <path class="water" d={tile.water} />
                <path class="land" d={tile.land} />
                <path class="faint" d={tile.faint ?? ''} />
                <path class="dotted" d={tile.dotted} />
                <path class="border" d={tile.border} />
                <path class="thin" d={tile.thin} />
                <path class="road" d={tile.roads} />
              </g>
            {/each}
            <path d="M2705 1548Q2693 1620 2709 1668" fill="none" stroke="#f0f0f0" stroke-width="3" />
            <g filter="url(#glass)">
              {#each bubbles as b}
                {#if b.r > 12}
                  <circle cx={b.x} cy={b.y} r={b.r + 3.6} fill="none" stroke="rgb(235,245,255)" stroke-width="1.800" stroke-dasharray="4 4" />
                {/if}
                <circle cx={b.x} cy={b.y} r={b.r} fill="rgb({b.red},{b.green},0)" />
                <circle cx={b.x} cy={b.y} r={b.r} fill="none" stroke="rgb({b.red},{b.green},255)" stroke-width="5.400" />
              {/each}
            </g>
            {#each labels as [text, x, y, w, size, tone]}
              <text class={tone} {x} {y} font-size={size} textLength={w}>{text}</text>
            {/each}
            <text class="google" x="1572" y="1785" textLength="115"><tspan fill="#4285f4">G</tspan><tspan fill="#ea4335">o</tspan><tspan fill="#fbbc05">o</tspan><tspan fill="#4285f4">g</tspan><tspan fill="#34a853">l</tspan><tspan fill="#ea4335">e</tspan></text>
          </svg>

          <div class="types"><button class="on">Map</button><button>Satellite</button></div>
          <button class="ctl full">
            <svg viewBox="0 0 40 40"><path d="M2.500 13V2.500H13M27 2.500h10.500V13M37.500 27v10.500H27M13 37.500H2.500V27" fill="none" stroke="#666" stroke-width="5" /></svg>
          </button>
          <button class="ctl man">
            <svg viewBox="0 0 36 62">
              <path d="M10 19h16l6 6 3 19h-6l-1 16H19V44h-2v16H8L7 44H1l3-19z" fill="#fbbc2c" stroke="#8a6a1c" stroke-width="1.200" />
              <path d="M10 20h16l-8 11z" fill="#e28330" />
              <circle cx="18" cy="11" r="10" fill="#fbbc2c" stroke="#a8802a" stroke-width="1.200" />
            </svg>
          </button>
          <div class="ctl zoom">
            <svg viewBox="0 0 40 40"><path d="M20 1v38M1 20h38" stroke="#666" stroke-width="8" /></svg>
            <hr />
            <svg viewBox="0 0 40 40"><path d="M0 20h40" stroke="#666" stroke-width="9" /></svg>
          </div>
          <div class="credits">
            <span class="c1">Keyboard shortcuts</span>
            <span class="c2">Map Data ©2024 Google, INEGI</span>
            <span class="c3">100 km<i></i></span>
            <span class="c4">Terms</span>
          </div>
        </div>
        <div class="legend">
          <div class="size">
            <strong>Average Zillow Housing Price</strong>
            <div class="row">
              <span>44,354.27</span>
              <svg viewBox="0 0 120 42"><circle cx="9" cy="21" r="3.500" fill="#808080" /><circle cx="45.500" cy="21" r="13" fill="#808080" /><circle cx="99.500" cy="20.500" r="20.500" fill="#808080" /></svg>
              <span>283,446</span>
            </div>
          </div>
          <div class="tone">
            <strong>Area Deprivation Index</strong>
            <div class="row"><span>2.0</span><div class="ramp"></div><span>100.0</span></div>
          </div>
        </div>
        <a class="notes" href="#notes">Release notes</a>
      </section>
    </main>
  </div>

  <div class="menu">
    <button>
      <svg viewBox="0 0 38 38"><path d="M30 13A13 13 0 1 0 31 24" fill="none" stroke="#222" stroke-width="4" /><path d="M35 3v14H21z" fill="#222" /></svg>
      <span>Refresh data</span>
    </button>
    <button class="hover">
      <svg viewBox="0 0 38 44"><rect x="10" y="3" width="25" height="31" rx="2.500" fill="none" stroke="#222" stroke-width="3.800" /><path d="M3 10v29q0 2 2 2h23" fill="none" stroke="#222" stroke-width="3.800" /></svg>
      <span>Make a copy</span>
    </button>
    <button>
      <svg viewBox="0 0 38 38"><rect x="2.500" y="2.500" width="33" height="33" rx="2.500" fill="none" stroke="#222" stroke-width="3.800" /><path d="M14.500 11l10 8-10 8z" fill="#222" /></svg>
      <span>Present</span>
    </button>
  </div>

  <svg class="marks" viewBox="0 0 4404 2042" preserveAspectRatio="none">
    <g fill="none" stroke="#f00" stroke-width="14">
      <path d="M4043.500 13A105 80.500 0 0 0 3975 87.700M3980 112A105 80.500 0 0 0 4067.500 168M4109 166A105 80.500 0 0 0 4185 96.700M4178 56A105 80.500 0 0 0 4085 7.300" />
      <path d="M4255 217A174 81 0 0 0 4145 217M4105 227A174 81 0 0 0 4069 347M4107 364A174 81 0 0 0 4216 376M4257 371.500A174 81 0 0 0 4356 330M4374 293A174 81 0 0 0 4295.500 227" />
    </g>
  </svg>
</div>

<style>
  :global(html) { font-size: 9.3006px; }
  :global(body) { overflow: hidden; }
  .app { position: relative; width: 440.4rem; height: 204.2rem; overflow: hidden; display: flex; flex-direction: column; background: #fff; font-family: Roboto, "Liberation Sans", sans-serif; color: #202124; }
  .app, .app * { box-sizing: border-box; }
  button { border: 0; background: none; padding: 0; margin: 0; font: inherit; color: inherit; display: flex; align-items: center; }
  svg { display: block; flex: none; }
  span, strong, h1, h2 { white-space: nowrap; }

  .strip { height: 1.9rem; margin-top: .7rem; background: #3c3c3c; flex: none; }
  header { height: 13.35rem; flex: none; display: flex; align-items: flex-start; padding-left: 4.8rem; border-bottom: .25rem solid #dadce0; }
  .logo { width: 3.6rem; height: 5.6rem; margin-top: 3.8rem; }
  h1 { margin: 0 -.1rem 0 0; padding: 0 0 0 3.1rem; margin-top: 4.1rem; line-height: 5.4rem; font-size: 4.5rem; font-weight: 400; color: #444746; letter-spacing: .05rem; flex: 1; }
  .btn, .share { height: 7.3rem; margin-top: 2.8rem; border-radius: .7rem; font-size: 2.95rem; font-weight: 500; flex: none; }
  .reset { width: 16.7rem; border: .2rem solid #e8e8e8; color: #b8b8b8; padding-left: 1.4rem; margin-right: 3.5rem; font-weight: 400; letter-spacing: .04rem; }
  .reset svg { width: 3.4rem; height: 1.8rem; margin-right: 1.9rem; }
  .share { width: 20.8rem; display: flex; border: .2rem solid #dadce0; color: #1a73e8; margin-right: 3.3rem; }
  .share button { width: 16.6rem; padding-left: 1.2rem; }
  .share svg { width: 3.6rem; height: 2.6rem; margin-right: 1.8rem; }
  .share button.caret { width: 4.1rem; padding: 0; border-left: .2rem solid #dadce0; justify-content: center; }
  .share .caret svg { width: 1.6rem; height: .7rem; margin: 0; }
  .edit { width: 18.6rem; background: #1a73e8; color: #fff; padding-left: 3.7rem; }
  .edit svg { width: 3rem; height: 2.9rem; margin-right: 2.2rem; }
  .more { width: 9.7rem; height: 9.7rem; border: .2rem solid #e6e6e6; border-radius: 50%; margin: 1.7rem 3.55rem 0 3.2rem; justify-content: center; flex: none; }
  .more svg { width: 1rem; height: 3.6rem; }
  .rule { width: .2rem; height: 9.7rem; margin-top: 1.7rem; background: #e4e4e4; flex: none; }
  .help { width: 4.1rem; height: 4.1rem; margin: 4.6rem 4.5rem 0 4.15rem; }
  .avatar { width: 6.6rem; height: 6.6rem; margin: 3.3rem 5rem 0 0; }

  .body { flex: 1; display: flex; min-height: 0; }
  nav { width: 52.9rem; border-right: .2rem solid #dcdcdc; padding-top: 4.85rem; display: flex; flex-direction: column; flex: none; }
  nav a { width: 51.1rem; height: 9.85rem; border-radius: 0 4.9rem 4.9rem 0; padding-left: 4.9rem; display: flex; align-items: center; font-size: 2.88rem; font-weight: 500; color: #5f6368; text-decoration: none; white-space: nowrap; letter-spacing: .055rem; }
  nav a.active { background: #cde4fc; color: #0b7ff5; }
  main { flex: 1; background: #eee; padding: 4.35rem 0 0 69.8rem; min-width: 0; }
  .report { width: 247.7rem; height: 184rem; background: #fff; box-shadow: 0 .1rem .6rem rgba(0, 0, 0, .3); padding: 5.2rem 0 0 7.8rem; display: flex; flex-direction: column; align-items: flex-start; }
  .filter { width: 62rem; height: 10.5rem; background: #fff; display: flex; align-items: center; padding: .2rem 4.8rem 0 5rem; font-size: 2.65rem; color: #555; box-shadow: 0 .3rem .3rem rgba(0, 0, 0, .36), 0 0 .7rem rgba(0, 0, 0, .2); }
  .filter b { font-weight: 500; color: #222; }
  .filter .name { flex: 1; }
  .filter .count { font-size: 2.45rem; }
  .filter svg { width: 1.2rem; height: .8rem; margin: -.4rem 0 0 2.2rem; }
  h2 { margin: 8.4rem 0 0 67.3rem; font-size: 3.72rem; line-height: 5.6rem; font-weight: 400; color: #111; }
  .map { position: relative; width: 180.3rem; height: 129.05rem; margin: 1.1rem 0 0 24.9rem; flex: none; }
  .canvas { width: 100%; height: 100%; }
  .water { fill: #c9c9c9; }
  .land { fill: #f5f5f5; }
  .road, .thin, .faint, .border, .dotted { fill: none; vector-effect: non-scaling-stroke; stroke-linejoin: round; }
  .road { stroke: #d9d9d9; stroke-width: 4.800px; }
  .thin { stroke: #d9d9d9; stroke-width: 2.800px; }
  .faint { stroke: #ebebeb; stroke-width: 1.700px; }
  .border { stroke: #b8b8b8; stroke-width: 1.900px; }
  .dotted { stroke: #c0c0c0; stroke-width: 1.700px; stroke-dasharray: 3.500 3.500; }
  text { font-weight: 500; paint-order: stroke; stroke: rgba(245, 245, 245, .55); stroke-width: 4; stroke-linejoin: round; }
  .state { fill: #777; }
  .nation { fill: #858585; }
  .park { fill: #acacac; font-weight: 400; }
  .google { font-size: 39px; font-weight: 600; font-family: Lato, sans-serif; stroke: #fff; stroke-width: 4.500; }

  .types, .ctl, .credits { position: absolute; background: #fff; border-radius: .5rem; box-shadow: 0 .2rem .7rem rgba(0, 0, 0, .28); }
  .types { left: 2.1rem; top: 2.05rem; display: flex; height: 8.2rem; font-size: 3.78rem; color: #565656; }
  .types button { width: 20.5rem; justify-content: center; }
  .types .on { width: 14.1rem; border-right: .2rem solid #ececec; font-weight: 500; color: #000; }
  .ctl { width: 8.25rem; right: 2.1rem; justify-content: center; }
  .full { height: 8.25rem; top: 2.05rem; }
  .full svg { width: 3.9rem; height: 3.9rem; }
  .man { height: 8.25rem; top: 92.7rem; }
  .man svg { width: 3.6rem; height: 6.2rem; }
  .zoom { height: 16.8rem; top: 107.3rem; display: flex; flex-direction: column; align-items: center; }
  .zoom svg { width: 4rem; height: 4rem; margin: 2.2rem 0; }
  .zoom hr { width: 6.2rem; height: .2rem; border: 0; margin: 0; background: #e6e6e6; }
  .credits { right: 0; bottom: 0; width: 79.6rem; height: 3rem; display: flex; align-items: center; border-radius: 0; box-shadow: none; background: rgba(245, 245, 245, .75); font-size: 2.06rem; color: #111; }
  .credits span { height: 100%; display: flex; align-items: center; padding-left: 1.3rem; border-left: .2rem solid #ccc; }
  .credits .c1 { width: 19.9rem; padding-left: .9rem; border: 0; }
  .c2 { width: 31.2rem; }
  .c3 { width: 20.2rem; }
  .c4 { flex: 1; }
  .c3 i { width: 9.8rem; height: 1.2rem; border: solid #666; border-width: 0 .3rem .3rem; margin: .2rem 0 0 .8rem; }

  .legend { display: flex; margin: 1.85rem 0 0 27.9rem; font-size: 2.5rem; line-height: 3.4rem; color: #222; }
  .size { width: 40.7rem; }
  strong { font-weight: 500; color: #111; display: block; font-size: 2.47rem; letter-spacing: 0; }
  .row { display: flex; align-items: center; height: 4.2rem; margin-top: .65rem; }
  .size svg { width: 12rem; height: 4.2rem; margin: 0 2.1rem 0 0; }
  .size .row span:first-child { width: 12.4rem; }
  .tone .row span:first-child { width: 3.9rem; }
  .ramp { width: 14.8rem; height: 4.1rem; margin-right: 1rem; background: linear-gradient(90deg, #cfe5ff, #0073f0); }
  .notes { margin: 5.75rem 0 0 215.8rem; font-size: 2.89rem; line-height: 4rem; color: #8e3fd4; text-decoration: underline; text-decoration-thickness: .2rem; text-underline-offset: .3rem; white-space: nowrap; }

  .menu { position: absolute; left: 402.6rem; top: 14.1rem; width: 33.7rem; height: 33.1rem; padding-top: 1.5rem; background: #fff; border-radius: .9rem; box-shadow: 0 1.1rem 1.6rem rgba(0, 0, 0, .3), 0 .4rem 2.600rem rgba(0, 0, 0, .16), 0 .3rem .6rem rgba(0, 0, 0, .2); font-size: 3.2rem; color: #333; }
  .menu button { width: 100%; height: 9.97rem; padding: 0 0 .4rem 3.8rem; letter-spacing: .065rem; }
  .menu svg { width: 3.8rem; height: 4.2rem; margin-right: 4rem; }
  .menu .hover { background: #f5f5f5; }
  .marks { position: absolute; left: 0; top: 0; width: 100%; height: 100%; pointer-events: none; }
</style>
